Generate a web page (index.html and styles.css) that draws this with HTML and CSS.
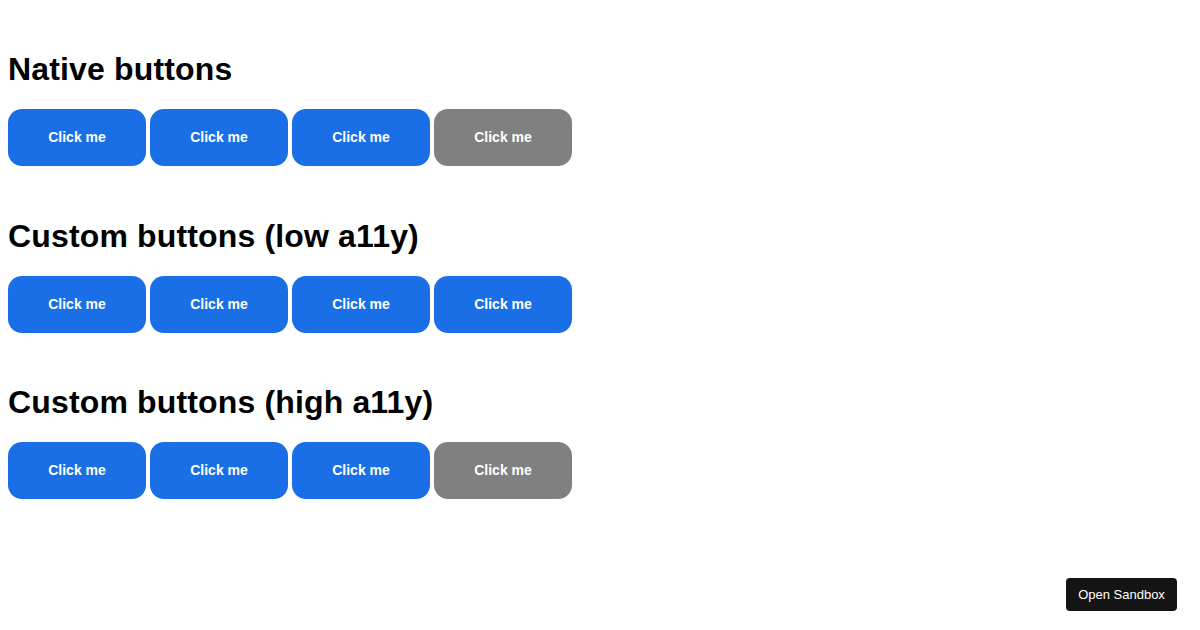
FILE: index.html
```html
<!DOCTYPE html>
<html>
<head>
<meta charset="utf-8">
<link rel="stylesheet" href="styles.css">
</head>
<body>
<main class="page">
  <section class="group">
    <h1 class="title">Native buttons</h1>
    <div class="row">
      <button class="btn">Click me</button>
      <button class="btn">Click me</button>
      <button class="btn">Click me</button>
      <button class="btn btn-disabled">Click me</button>
    </div>
  </section>
  <section class="group">
    <h1 class="title">Custom buttons (low a11y)</h1>
    <div class="row">
      <div class="btn">Click me</div>
      <div class="btn">Click me</div>
      <div class="btn">Click me</div>
      <div class="btn">Click me</div>
    </div>
  </section>
  <section class="group">
    <h1 class="title">Custom buttons (high a11y)</h1>
    <div class="row">
      <div class="btn" role="button">Click me</div>
      <div class="btn" role="button">Click me</div>
      <div class="btn" role="button">Click me</div>
      <div class="btn btn-disabled" role="button">Click me</div>
    </div>
  </section>
</main>
<a class="sandbox">Open Sandbox</a>
</body>
</html>
```
FILE: styles.css
```css
html, body {
  margin: 0;
  padding: 0;
  background: #fff;
}
body {
  font-family: "Liberation Sans", Arial, sans-serif;
  color: #000;
}
.page {
  padding: 51px 8px 0 8px;
  display: flex;
  flex-direction: column;
  gap: 51.5px;
}
.group {
  display: flex;
  flex-direction: column;
}
.title {
  margin: 0 0 21px 0;
  font-size: 32px;
  font-weight: 700;
  line-height: 37px;
  letter-spacing: 0.15px;
}
.row {
  display: flex;
  gap: 4px;
}
.btn {
  box-sizing: border-box;
  width: 138px;
  height: 57px;
  border: none;
  border-radius: 14px;
  background: #1a6fe6;
  color: #fff;
  font-family: "Liberation Sans", Arial, sans-serif;
  font-weight: 700;
  font-size: 14px;
  display: flex;
  align-items: center;
  justify-content: center;
  padding: 0 0 1px 0;
  margin: 0;
}
.btn-disabled {
  background: #808080;
}
.sandbox {
  position: fixed;
  right: 23px;
  bottom: 19px;
  width: 111px;
  height: 33px;
  box-sizing: border-box;
  background: #141414;
  color: #fff;
  border-radius: 4px;
  font-size: 13px;
  display: flex;
  align-items: center;
  justify-content: center;
  font-family: "Liberation Sans", Arial, sans-serif;
}
```
